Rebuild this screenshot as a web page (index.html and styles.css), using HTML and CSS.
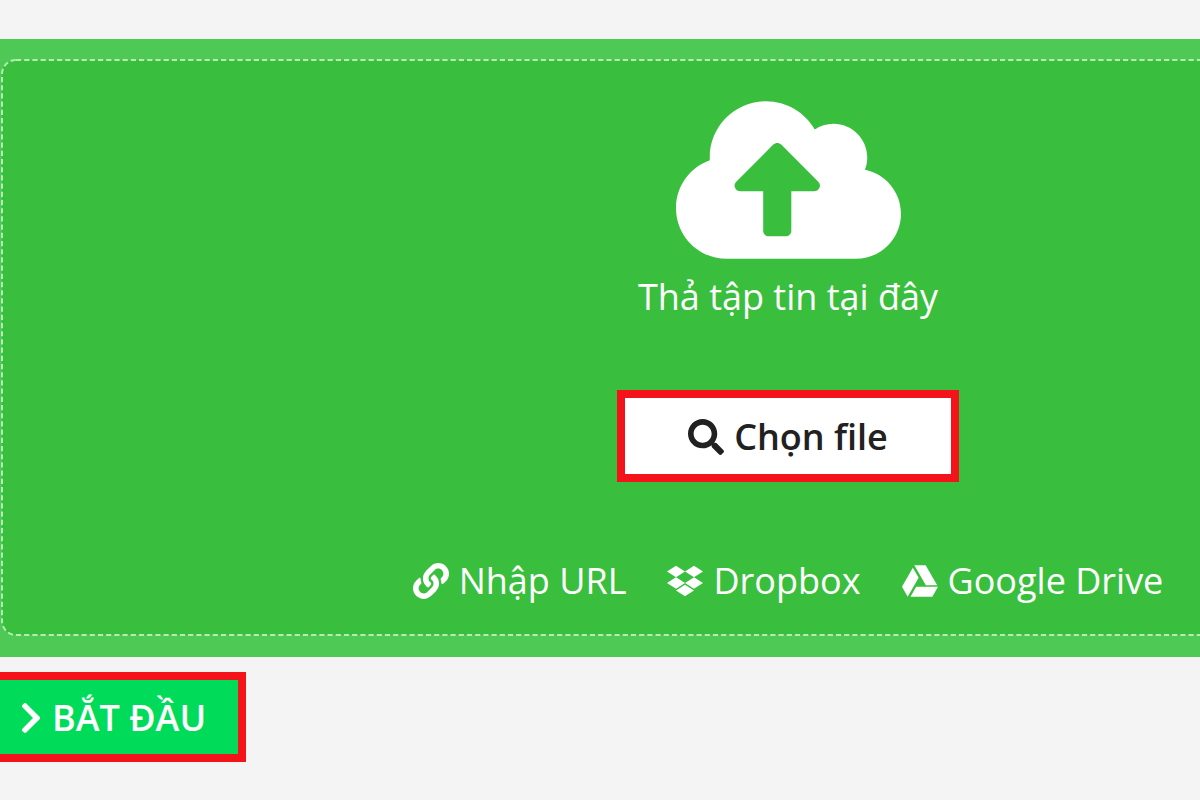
FILE: index.html
```html
<!DOCTYPE html>
<html lang="vi">
<head>
    <meta charset="UTF-8">
    <meta name="viewport" content="width=device-width, initial-scale=1.0">
    <title>Tải tập tin lên</title>
    <link rel="stylesheet" href="styles.css">
</head>
<body>
    <main class="page">
        <section class="upload">
            <div class="dropzone">
                <svg class="dropzone-outline" aria-hidden="true">
                    <rect width="100%" height="100%" rx="14"/>
                </svg>
                <svg class="cloud" viewBox="0 32 640 448" aria-hidden="true">
                    <path d="M537.6 226.6c4.1-10.7 6.4-22.4 6.4-34.6 0-53-43-96-96-96-19.7 0-38.1 6-53.3 16.2C367 64.2 315.3 32 256 32c-88.4 0-160 71.6-160 160 0 2.7.1 5.4.2 8.1C40.2 219.8 0 273.2 0 336c0 79.5 64.5 144 144 144h368c70.7 0 128-57.3 128-128 0-61.9-44-113.6-102.4-125.4zM393.4 288H328v112c0 8.8-7.2 16-16 16h-48c-8.8 0-16-7.2-16-16V288h-65.4c-14.3 0-21.4-17.2-11.3-27.3l105.4-105.4c6.2-6.2 16.4-6.2 22.6 0l105.4 105.4c10.1 10.1 2.9 27.3-11.3 27.3z"/>
                </svg>
                <p class="hint">Thả tập tin tại đây</p>
                <button type="button" class="btn btn-choose">
                    <svg class="icon" viewBox="0 0 512 512" aria-hidden="true">
                        <path d="M505 442.7L405.3 343c-4.5-4.5-10.6-7-17-7H372c27.6-35.3 44-79.7 44-128C416 93.1 322.9 0 208 0S0 93.1 0 208s93.1 208 208 208c48.3 0 92.7-16.4 128-44v16.3c0 6.4 2.5 12.5 7 17l99.7 99.7c9.4 9.4 24.6 9.4 33.9 0l28.3-28.3c9.4-9.4 9.4-24.6.1-34zM208 336c-70.7 0-128-57.2-128-128 0-70.7 57.2-128 128-128 70.7 0 128 57.2 128 128 0 70.7-57.2 128-128 128z"/>
                    </svg>
                    Chọn file
                </button>
                <div class="sources">
                    <a href="#">
                        <svg class="icon" viewBox="0 0 512 512" aria-hidden="true">
                            <path d="M326.612 185.391c59.747 59.809 58.927 155.698.36 214.59-.11.12-.24.25-.36.37l-67.2 67.2c-59.27 59.27-155.699 59.262-214.96 0-59.27-59.26-59.27-155.7 0-214.96l37.106-37.106c9.84-9.84 26.786-3.3 27.294 10.606.648 17.722 3.826 35.527 9.69 52.721 1.986 5.822.567 12.262-3.783 16.612l-13.087 13.087c-28.026 28.026-28.905 73.66-1.155 101.96 28.024 28.579 74.086 28.749 102.325.51l67.2-67.19c28.191-28.191 28.073-73.757 0-101.83-3.701-3.694-7.429-6.564-10.341-8.569a16.037 16.037 0 0 1-6.947-12.606c-.396-10.567 3.348-21.456 11.698-29.806l21.054-21.055c5.521-5.521 14.182-6.199 20.584-1.731a152.482 152.482 0 0 1 20.522 17.197zM467.547 44.449c-59.261-59.262-155.69-59.27-214.96 0l-67.2 67.2c-.12.12-.25.25-.36.37-58.566 58.892-59.387 154.781.36 214.59a152.454 152.454 0 0 0 20.521 17.196c6.402 4.468 15.064 3.789 20.584-1.731l21.054-21.055c8.35-8.35 12.094-19.239 11.698-29.806a16.037 16.037 0 0 0-6.947-12.606c-2.912-2.005-6.64-4.875-10.341-8.569-28.073-28.073-28.191-73.639 0-101.83l67.2-67.19c28.239-28.239 74.3-28.069 102.325.51 27.75 28.3 26.872 73.934-1.155 101.96l-13.087 13.087c-4.35 4.35-5.769 10.79-3.783 16.612 5.864 17.194 9.042 34.999 9.69 52.721.509 13.906 17.454 20.446 27.294 10.606l37.106-37.106c59.271-59.259 59.271-155.699.001-214.959z"/>
                        </svg>
                        Nhập URL
                    </a>
                    <a href="#">
                        <svg class="icon" viewBox="0 0 528 512" aria-hidden="true">
                            <path d="M264.4 116.3l-132 84.3 132 84.3-132 84.3L0 284.1l132.3-84.3L0 116.3 132.3 32l132.1 84.3zM131.6 395.7l132-84.3 132 84.3-132 84.3-132-84.3zm132.8-111.6l132-84.3-132-83.6L395.7 32 528 116.3l-132.3 84.3L528 284.8l-132.3 84.3-131.3-85z"/>
                        </svg>
                        Dropbox
                    </a>
                    <a href="#">
                        <svg class="icon" viewBox="0 0 512 512" aria-hidden="true">
                            <path d="M339 314.9L175.4 32h161.2l163.6 282.9H339zm-137.5 23.6L120.9 480h310.5L512 338.5H201.5zM154.1 67.4L0 338.5 80.6 480 237 208.8 154.1 67.4z"/>
                        </svg>
                        Google Drive
                    </a>
                </div>
            </div>
        </section>
        <button type="button" class="btn btn-start">
            <svg class="icon icon-narrow" viewBox="0 0 320 512" aria-hidden="true">
                <path d="M285.476 272.971L91.132 467.314c-9.373 9.373-24.569 9.373-33.941 0l-22.667-22.667c-9.357-9.357-9.375-24.522-.04-33.901L188.505 256 34.484 101.255c-9.335-9.379-9.317-24.544.04-33.901l22.667-22.667c9.373-9.373 24.569-9.373 33.941 0L285.475 239.03c9.373 9.372 9.373 24.568.001 33.941z"/>
            </svg>
            BẮT ĐẦU
        </button>
    </main>
</body>
</html>
```
FILE: styles.css
```css
body {
    margin: 0;
    background: #f4f4f4;
    color: #fff;
    font-family: 'Open Sans', 'Noto Sans', sans-serif;
    font-size: 36px;
    line-height: 48px;
}
.page {
    padding-top: 39px;
    overflow: hidden;
}
.upload {
    width: 131%;
    padding: 21px 2px 22px;
    background: #4fc955;
}
.dropzone {
    position: relative;
    display: flex;
    flex-direction: column;
    align-items: center;
    padding: 41px 0 30px;
    border-radius: 14px;
    background: #39bf3d;
}
.dropzone-outline {
    position: absolute;
    inset: 0;
    width: 100%;
    height: 100%;
    overflow: visible;
    pointer-events: none;
}
.dropzone-outline rect {
    fill: none;
    stroke: #b4ecb2;
    stroke-width: 2;
    stroke-dasharray: 5.2 3;
}
.cloud {
    width: 225px;
    height: 158px;
    fill: #fff;
}
.hint {
    margin: 14px 0 69px;
}
.icon {
    flex: none;
    width: 36px;
    height: 36px;
    fill: currentColor;
}
.icon-narrow {
    width: 22px;
}
.btn {
    display: flex;
    align-items: center;
    gap: 10px;
    border: 8px solid #f5131b;
    font: inherit;
    font-weight: 600;
    cursor: pointer;
}
.btn-choose {
    padding: 15px 63px 13px;
    background: #fff;
    color: #212121;
}
.sources {
    display: flex;
    gap: 41px;
    margin-top: 75px;
}
.sources a {
    display: flex;
    align-items: center;
    gap: 10px;
    color: inherit;
    text-decoration: none;
}
.btn-start {
    margin-top: 15px;
    padding: 14px 32px 12px 20px;
    border-left: 0;
    background: #00dc5a;
    color: #fff;
}
```
